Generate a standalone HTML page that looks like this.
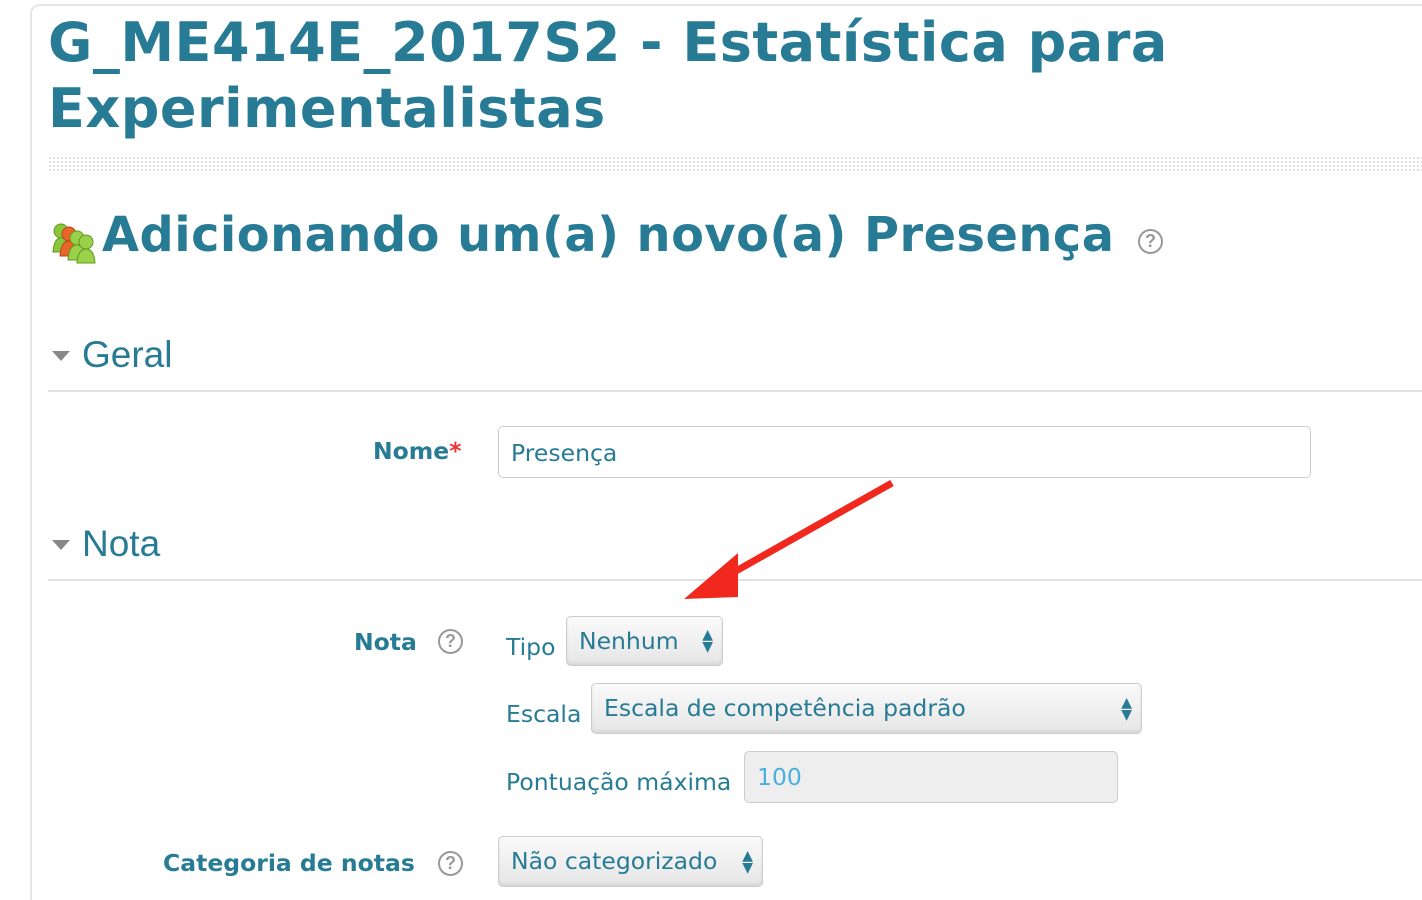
<!DOCTYPE html>
<html style="overflow:hidden;height:900px"><head><meta charset="utf-8"><style>
body{margin:0;width:1422px;height:900px;overflow:hidden;background:#fff;font-family:"DejaVu Sans","Liberation Sans",sans-serif;color:#277b95;position:relative}
.card{position:absolute;left:30px;top:4px;width:1392px;height:896px;border:2px solid #e5e5e5;border-bottom:none;border-right:none;border-radius:10px 0 0 0;box-sizing:border-box}
.abs{position:absolute;white-space:nowrap}
h1{position:absolute;left:48px;top:10px;margin:0;font-size:54px;line-height:66px;font-weight:bold;letter-spacing:0.5px}
.dots{position:absolute;left:48px;top:156px;width:1374px;height:16px;background-image:radial-gradient(circle,#ddd 1px,transparent 1.3px);background-size:4px 4px}
.h2{left:102px;top:208px;font-size:47.8px;font-weight:bold;letter-spacing:0.5px}
.leg{font-size:37px;font-family:"Liberation Sans",sans-serif}
.tri{position:absolute;width:0;height:0;border-left:9px solid transparent;border-right:9px solid transparent;border-top:10px solid #888}
.line{position:absolute;left:48px;width:1374px;height:2px;background:#e2e2e2}
.lbl{font-size:23.5px;font-weight:bold;text-align:right}
.q{position:absolute;width:21px;height:21px;border:2.5px solid #999;border-radius:50%;color:#999;font:bold 18px/21px "Liberation Sans",sans-serif;text-align:center}
.inp{position:absolute;border:1.5px solid #ccc;border-radius:5px;font-size:23.5px;box-sizing:border-box;padding-left:12px}
.sel{background:linear-gradient(#fafafa,#e6e6e6);box-shadow:inset 0 -2px 3px rgba(0,0,0,.08)}
.arr{position:absolute;right:9px;top:50%;transform:translateY(-50%);font-size:14px;line-height:12px;color:#277b95}
.t{font-size:23.5px}
</style></head><body>
<div class="card"></div>
<h1>G_ME414E_2017S2 - Estatística para<br>Experimentalistas</h1>
<div class="dots"></div>
<svg class="abs" style="left:52px;top:222px" width="44" height="42" viewBox="0 0 44 42">
<g fill="#8cc43a" stroke="#5e9a1c"><circle cx="9" cy="9" r="7"/><path d="M1 30 Q2 16 9 16 Q16 16 17 30Z"/></g>
<g fill="#e8662a" stroke="#b84516"><circle cx="17" cy="12" r="7"/><path d="M8 34 Q9 19 17 19 Q25 19 26 34Z"/></g>
<g fill="#9ad04a" stroke="#5e9a1c"><circle cx="25" cy="16" r="7"/><path d="M16 38 Q17 23 25 23 Q33 23 34 38Z"/><circle cx="34" cy="20" r="7"/><path d="M25 41 Q26 27 34 27 Q42 27 43 41Z"/></g>
</svg>
<div class="abs h2">Adicionando um(a) novo(a) Presença</div>
<div class="q" style="left:1138px;top:229px">?</div>
<div class="tri" style="left:52px;top:351px"></div>
<div class="abs leg" style="left:82px;top:334px">Geral</div>
<div class="line" style="top:390px"></div>
<div class="abs lbl" style="left:373px;top:437px">Nome<span style="color:#e33">*</span></div>
<div class="inp" style="left:498px;top:426px;width:813px;height:52px;line-height:52px">Presença</div>
<div class="tri" style="left:52px;top:540px"></div>
<div class="abs leg" style="left:82px;top:523px">Nota</div>
<div class="line" style="top:579px"></div>
<svg class="abs" style="left:680px;top:475px" width="220" height="130"><line x1="212" y1="8" x2="40" y2="105" stroke="#f0281e" stroke-width="7"/><polygon points="4,124 58,78 58,122" fill="#f0281e"/></svg>
<div class="abs lbl" style="left:354px;top:628px">Nota</div>
<div class="q" style="left:438px;top:629px">?</div>
<div class="abs t" style="left:506px;top:633px">Tipo</div>
<div class="inp sel" style="left:566px;top:616px;width:157px;height:50px;line-height:48px">Nenhum<span class="arr">▲<br>▼</span></div>
<div class="abs t" style="left:506px;top:700px">Escala</div>
<div class="inp sel" style="left:591px;top:683px;width:551px;height:51px;line-height:49px">Escala de competência padrão<span class="arr">▲<br>▼</span></div>
<div class="abs t" style="left:506px;top:768px">Pontuação máxima</div>
<div class="inp" style="left:744px;top:751px;width:374px;height:52px;line-height:50px;background:#eee;color:#4ab0dd">100</div>
<div class="abs lbl" style="left:163px;top:849px">Categoria de notas</div>
<div class="q" style="left:438px;top:851px">?</div>
<div class="inp sel" style="left:498px;top:836px;width:265px;height:51px;line-height:49px">Não categorizado<span class="arr">▲<br>▼</span></div>
</body></html>
